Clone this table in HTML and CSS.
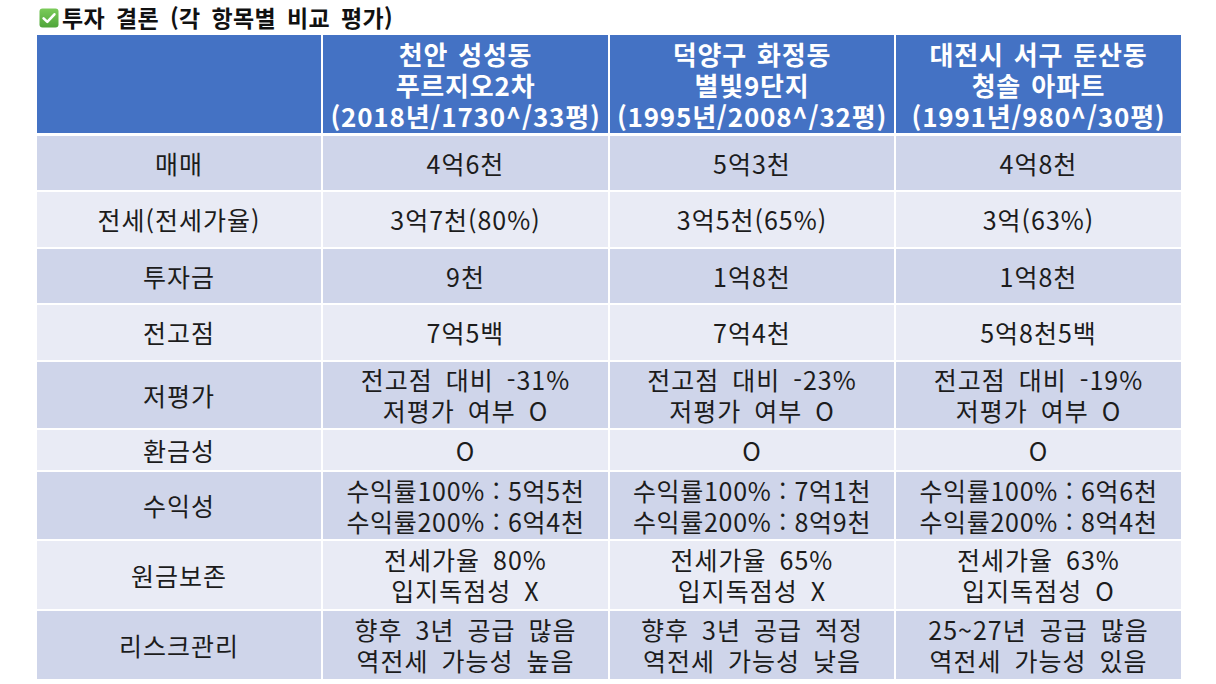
FILE: index.html
```html
<!DOCTYPE html>
<html lang="ko">
<head>
<meta charset="utf-8">
<title>투자 결론</title>
<link rel="stylesheet" href="styles.css">
</head>
<body>
<div class="page">
  <h1 class="title">
    <svg class="check" viewBox="0 0 20 20" width="20" height="20" aria-hidden="true">
      <defs>
        <linearGradient id="g" x1="0" y1="0" x2="0" y2="1">
          <stop offset="0" stop-color="#7BCB5A"/>
          <stop offset="1" stop-color="#4FA53A"/>
        </linearGradient>
      </defs>
      <rect x="0.5" y="0.5" width="19" height="19" rx="3" fill="url(#g)"/>
      <path d="M4.6 10.4 L8.3 13.9 L15.4 6.3" fill="none" stroke="#fff" stroke-width="2.6" stroke-linecap="round" stroke-linejoin="round"/>
    </svg>
    <span>투자 결론 (각 항목별 비교 평가)</span>
  </h1>
  <div class="grid">
    <div class="hd"></div>
    <div class="hd">천안 성성동<br>푸르지오2차<br>(2018년/1730^/33평)</div>
    <div class="hd">덕양구 화정동<br>별빛9단지<br>(1995년/2008^/32평)</div>
    <div class="hd">대전시 서구 둔산동<br>청솔 아파트<br>(1991년/980^/30평)</div>

    <div class="c odd">매매</div>
    <div class="c odd">4억6천</div>
    <div class="c odd">5억3천</div>
    <div class="c odd">4억8천</div>

    <div class="c even">전세(전세가율)</div>
    <div class="c even">3억7천(80%)</div>
    <div class="c even">3억5천(65%)</div>
    <div class="c even">3억(63%)</div>

    <div class="c odd">투자금</div>
    <div class="c odd">9천</div>
    <div class="c odd">1억8천</div>
    <div class="c odd">1억8천</div>

    <div class="c even">전고점</div>
    <div class="c even">7억5백</div>
    <div class="c even">7억4천</div>
    <div class="c even">5억8천5백</div>

    <div class="c odd">저평가</div>
    <div class="c odd">전고점 대비 -31%<br>저평가 여부 O</div>
    <div class="c odd">전고점 대비 -23%<br>저평가 여부 O</div>
    <div class="c odd">전고점 대비 -19%<br>저평가 여부 O</div>

    <div class="c even">환금성</div>
    <div class="c even">O</div>
    <div class="c even">O</div>
    <div class="c even">O</div>

    <div class="c odd">수익성</div>
    <div class="c odd tight">수익률100% : 5억5천<br>수익률200% : 6억4천</div>
    <div class="c odd tight">수익률100% : 7억1천<br>수익률200% : 8억9천</div>
    <div class="c odd tight">수익률100% : 6억6천<br>수익률200% : 8억4천</div>

    <div class="c even">원금보존</div>
    <div class="c even">전세가율 80%<br>입지독점성 X</div>
    <div class="c even">전세가율 65%<br>입지독점성 X</div>
    <div class="c even">전세가율 63%<br>입지독점성 O</div>

    <div class="c odd">리스크관리</div>
    <div class="c odd">향후 3년 공급 많음<br>역전세 가능성 높음</div>
    <div class="c odd">향후 3년 공급 적정<br>역전세 가능성 낮음</div>
    <div class="c odd">25~27년 공급 많음<br>역전세 가능성 있음</div>
  </div>
</div>
</body>
</html>
```

FILE: styles.css
```css
html, body {
  margin: 0;
  padding: 0;
  background: #ffffff;
}

body {
  font-family: "Noto Sans CJK KR", "Noto Sans", sans-serif;
  color: #1c1c1c;
}

.page {
  width: 1216px;
  height: 684px;
  padding-left: 37px;
  box-sizing: border-box;
  overflow: hidden;
}

.title {
  margin: 0;
  height: 35px;
  display: flex;
  align-items: center;
  gap: 3px;
  padding-left: 2px;
  font-size: 23px;
  font-weight: 700;
  line-height: 1;
  color: #111;
  letter-spacing: 0.4px;
  word-spacing: 4px;
}

.check {
  flex: none;
  display: block;
}

.grid {
  width: 1142px;
  display: grid;
  grid-template-columns: 284px 285px 284px 285px;
  grid-template-rows: 99px 54px 55px 54px 55px 66px 40px 67px 68px 68px;
  column-gap: 2px;
  row-gap: 2px;
}

.hd {
  background: #4472C4;
  color: #ffffff;
  font-weight: 700;
  font-size: 26px;
  line-height: 31px;
  letter-spacing: 0.8px;
  word-spacing: 2px;
  text-align: center;
  display: flex;
  align-items: center;
  justify-content: center;
  margin-bottom: 1px;
}

.c {
  font-size: 25px;
  line-height: 31px;
  letter-spacing: 1px;
  word-spacing: 5px;
  text-align: center;
  display: flex;
  align-items: center;
  justify-content: center;
}

.tight {
  word-spacing: 0;
  letter-spacing: 0.7px;
}

.odd {
  background: #CFD5EA;
}

.even {
  background: #E9EBF5;
}
```
